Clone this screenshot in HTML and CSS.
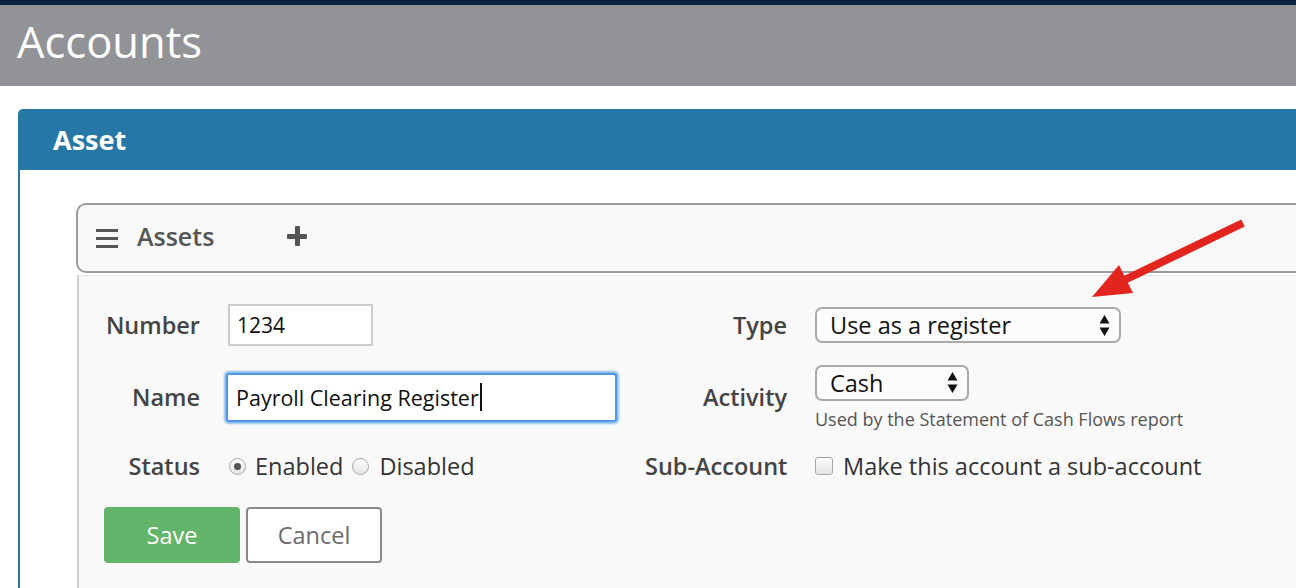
FILE: index.html
```html
<!DOCTYPE html>
<html>
<head>
<meta charset="utf-8">
<link rel="stylesheet" href="styles.css">
</head>
<body>
<div class="topbar"></div>
<header class="pagehead"><h1>Accounts</h1></header>
<main class="main">
  <section class="panel">
    <div class="panel-head">Asset</div>
    <div class="panel-body">
      <div class="card">
        <div class="card-head">
          <span class="burger"><i></i><i></i><i></i></span>
          <span class="card-title">Assets</span>
          <span class="plus"></span>
        </div>
        <div class="card-body">
          <div class="grid">
            <div class="lbl">Number</div>
            <div class="ctl"><div class="txt num">1234</div></div>
            <div class="lbl">Type</div>
            <div class="ctl">
              <div class="select type">Use as a register
                <svg class="arrows" width="11" height="23" viewBox="0 0 11 23"><path d="M5.5 1 L10.5 9.5 L0.5 9.5 Z M0.5 13.5 L10.5 13.5 L5.5 22 Z" fill="#111"/></svg>
              </div>
            </div>

            <div class="lbl">Name</div>
            <div class="ctl"><div class="txt name">Payroll Clearing Register<span class="caret"></span></div></div>
            <div class="lbl">Activity</div>
            <div class="ctl col">
              <div class="select act">Cash
                <svg class="arrows" width="11" height="23" viewBox="0 0 11 23"><path d="M5.5 1 L10.5 9.5 L0.5 9.5 Z M0.5 13.5 L10.5 13.5 L5.5 22 Z" fill="#111"/></svg>
              </div>
              <div class="help">Used by the Statement of Cash Flows report</div>
            </div>

            <div class="lbl">Status</div>
            <div class="ctl">
              <span class="radio on"></span><span class="opt">Enabled</span>
              <span class="radio"></span><span class="opt">Disabled</span>
            </div>
            <div class="lbl">Sub-Account</div>
            <div class="ctl">
              <span class="check"></span><span class="opt">Make this account a sub-account</span>
            </div>
          </div>
          <div class="actions">
            <button class="btn save">Save</button>
            <button class="btn cancel">Cancel</button>
          </div>
        </div>
      </div>
    </div>
  </section>
</main>
<svg class="arrow" width="1296" height="588" viewBox="0 0 1296 588">
  <line x1="1243" y1="223" x2="1112" y2="286" stroke="#e2261f" stroke-width="8"/>
  <polygon points="1092,297 1119,265 1133,293" fill="#e2261f"/>
</svg>
</body>
</html>
```
FILE: styles.css
```css
html, body {
  margin: 0;
  padding: 0;
}
body {
  width: 1296px;
  height: 588px;
  overflow: hidden;
  position: relative;
  font-family: "Open Sans", "Liberation Sans", sans-serif;
  background: #fff;
  color: #333;
}
.topbar {
  height: 5px;
  background: #0b2240;
}
.pagehead {
  height: 81px;
  background: #929397;
  box-sizing: border-box;
  padding-left: 17px;
}
.pagehead h1 {
  margin: 0;
  font-weight: 400;
  font-size: 43.5px;
  line-height: 73px;
  color: #fff;
}
.main {
  padding: 23px 0 0 18px;
}
.panel {
  width: 1400px;
}
.panel-head {
  height: 61px;
  background: #2677a5;
  border-radius: 5px 5px 0 0;
  color: #fff;
  font-weight: 700;
  font-size: 27px;
  line-height: 62px;
  padding-left: 35px;
}
.panel-body {
  border-left: 2px solid #2677a5;
  padding: 33px 0 0 56px;
  height: 400px;
}
.card-head {
  height: 62px;
  padding-bottom: 4px;
  box-sizing: content-box;
  border: 2px solid #9b9b9b;
  border-radius: 10px;
  background: #f8f8f8;
  display: flex;
  align-items: center;
  padding-left: 18px;
}
.burger {
  width: 22px;
  display: flex;
  flex-direction: column;
  gap: 5px;
  margin-top: 4px;
}
.burger i {
  display: block;
  height: 3px;
  background: #555;
}
.card-title {
  margin-left: 19px;
  font-size: 25px;
  font-weight: 600;
  color: #555;
}
.plus {
  position: relative;
  width: 20px;
  height: 20px;
  margin-left: 73px;
}
.plus::before, .plus::after {
  content: "";
  position: absolute;
  background: #555;
  border-radius: 1px;
}
.plus::before {
  left: 0; right: 0; top: 7.5px; height: 5px;
}
.plus::after {
  top: 0; bottom: 0; left: 7.5px; width: 5px;
}
.card-body {
  margin: 2px 0 0 1px;
  border-left: 2px solid #cfcfcf;
  border-top: 1px solid #e2e2e2;
  background: #f9f9f9;
  padding: 28px 0 40px 25px;
  height: 400px;
}
.grid {
  display: grid;
  grid-template-columns: 96px 389px 142px 1fr;
  grid-template-rows: 42px 66px 36px;
  column-gap: 28px;
  row-gap: 18px;
  align-items: center;
}
.lbl {
  text-align: right;
  font-size: 23.5px;
  font-weight: 600;
  color: #444;
  white-space: nowrap;
}
.ctl {
  display: flex;
  align-items: center;
}
.ctl.col {
  flex-direction: column;
  align-items: flex-start;
}
.txt {
  box-sizing: border-box;
  background: #fff;
  font-size: 21px;
  color: #111;
  display: flex;
  align-items: center;
  padding-left: 7px;
}
.txt.num {
  width: 145px;
  height: 42px;
  border: 2px solid #cccccc;
}
.txt.name {
  width: 391px;
  height: 49px;
  margin-left: -2px;
  padding-left: 8px;
  font-size: 21.5px;
  border: 2px solid #4f97e3;
  border-radius: 3px;
  box-shadow: 0 0 2px 2px #8dbcf0;
}
.caret {
  display: inline-block;
  width: 2px;
  height: 28px;
  background: #111;
  margin-left: 1px;
}
.select {
  box-sizing: border-box;
  height: 36px;
  border: 2px solid #a9a9a9;
  border-radius: 7px;
  background: #fcfcfc;
  font-size: 23.5px;
  color: #111;
  display: flex;
  align-items: center;
  justify-content: space-between;
  padding: 0 9px 0 13px;
}
.select.type {
  width: 306px;
}
.select.act {
  width: 154px;
}
.help {
  margin-top: 7px;
  font-size: 18px;
  color: #555;
  line-height: 22px;
}
.radio {
  box-sizing: border-box;
  width: 17px;
  height: 17px;
  border-radius: 50%;
  border: 1px solid #a8a8a8;
  background: linear-gradient(#fdfdfd, #e4e4e4);
  margin-left: 1px;
  position: relative;
}
.radio.on::after {
  content: "";
  position: absolute;
  left: 4px; top: 4px;
  width: 7px; height: 7px;
  border-radius: 50%;
  background: #555;
}
.opt {
  font-size: 23.5px;
  color: #333;
  margin-left: 9px;
  margin-right: 8px;
}
.opt + .radio + .opt {
  margin-left: 10px;
}
.check {
  box-sizing: border-box;
  width: 18px;
  height: 18px;
  border-radius: 3px;
  border: 1px solid #a8a8a8;
  background: linear-gradient(#fdfdfd, #e4e4e4);
}
.check + .opt {
  margin-left: 10px;
}
.actions {
  margin-top: 23px;
  display: flex;
  gap: 6px;
}
.btn {
  box-sizing: border-box;
  width: 136px;
  height: 56px;
  border-radius: 4px;
  font-family: "Open Sans", "Liberation Sans", sans-serif;
  font-size: 23.5px;
  cursor: pointer;
}
.btn.save {
  background: #62b56a;
  border: none;
  color: #fff;
}
.btn.cancel {
  background: #fff;
  border: 2px solid #8a8a8a;
  color: #6b6b6b;
}
.arrow {
  position: absolute;
  left: 0;
  top: 0;
  pointer-events: none;
}
```
